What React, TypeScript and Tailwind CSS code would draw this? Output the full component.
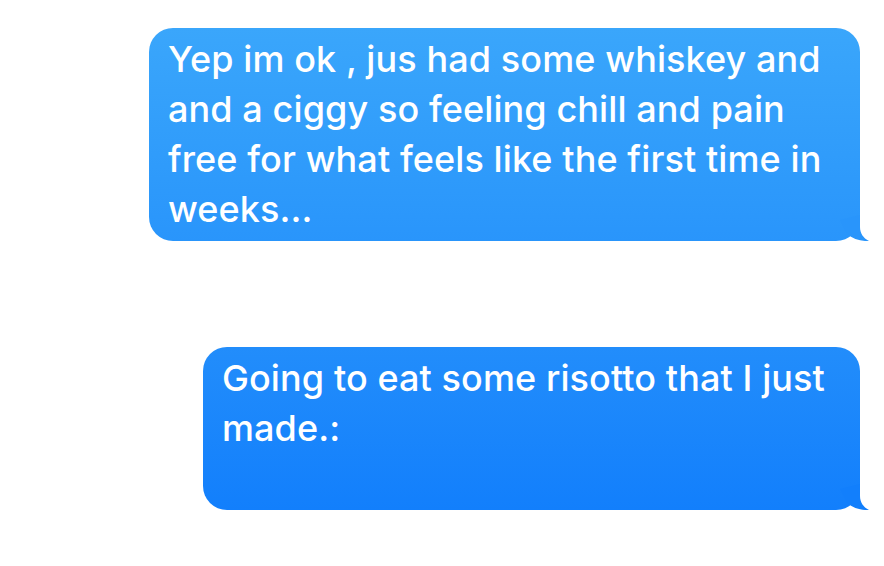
import React from "react"

function Tail({ color }: { color: string }) {
  // iMessage style hook at the bottom right of the bubble
  return (
    <svg
      className="absolute right-[-10px] bottom-0"
      width="40"
      height="31"
      viewBox="0 0 40 31"
    >
      <path
        d="M30,5 L30,17 C30,23 33,28 39,31 C31,31.5 23,29 17,24 L10,10 Z"
        fill={color}
      />
    </svg>
  )
}

function Bubble({
  lines,
  width,
  className,
  tail,
}: {
  lines: string[]
  width: string
  className: string
  tail: string
}) {
  return (
    <div className={`relative ${width}`}>
      <div
        className={`relative rounded-[24px] pl-[19px] pr-4 pt-[6px] pb-[7px] text-white text-[36px] font-medium leading-[50px] tracking-[0.1px] ${className}`}
      >
        {lines.map((l, i) => (
          <div key={i} className="whitespace-nowrap h-[50px]">
            {l}
          </div>
        ))}
      </div>
      <Tail color={tail} />
    </div>
  )
}

export default function App() {
  return (
    <div
      className="w-[884px] h-[566px] bg-white flex flex-col items-end pr-[24px] pt-[28px] gap-[106px]"
      style={{ fontFamily: 'Inter, "Noto Sans", sans-serif' }}
    >
      <Bubble
        width="w-[711px]"
        className="bg-gradient-to-b from-[#3aa6fb] to-[#2995fb]"
        tail="#2995fb"
        lines={[
          "Yep im ok , jus had some whiskey and",
          "and a ciggy so feeling chill and pain",
          "free for what feels like the first time in",
          "weeks...",
        ]}
      />
      <Bubble
        width="w-[657px]"
        className="bg-gradient-to-b from-[#228dfb] to-[#127ffc]"
        tail="#127ffc"
        lines={["Going to eat some risotto that I just", "made.:", ""]}
      />
    </div>
  )
}
